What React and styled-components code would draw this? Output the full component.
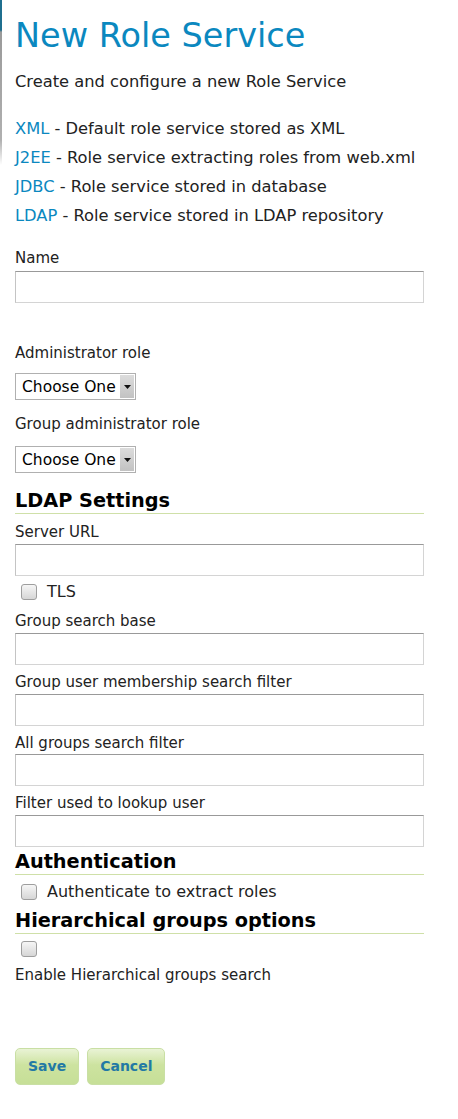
import React from 'react';
import styled, { createGlobalStyle } from 'styled-components';

const GlobalStyle = createGlobalStyle`
  body {
    margin: 0;
    background: #fff;
    font-family: "DejaVu Sans", Verdana, sans-serif;
    color: #222;
  }
`;

const Page = styled.div`
  position: relative;
  padding: 14px 34px 30px 15px;
  min-height: 1119px;
  box-sizing: border-box;
`;

const EdgeMark = styled.div`
  position: absolute;
  left: 0;
  top: 0;
  width: 2px;
  height: 165px;
  background: linear-gradient(#1f6f8f 0, #1f6f8f 30px, #9a9a9a 32px, #b0b0b0 140px, rgba(255,255,255,0) 165px);
`;

const Title = styled.h1`
  margin: 0;
  font-weight: normal;
  font-size: 33.5px;
  line-height: 44px;
  color: #0b88bf;
`;

const Intro = styled.p`
  margin: 14px 0 22px;
  font-size: 16.3px;
  line-height: 20px;
`;

const TypeList = styled.ul`
  list-style: none;
  margin: 0 0 18px;
  padding: 0;
`;

const TypeItem = styled.li`
  font-size: 16.3px;
  line-height: 29px;
`;

const TypeLink = styled.a`
  color: #0b88bf;
  text-decoration: none;
`;

const Label = styled.label`
  display: block;
  font-size: 15px;
  line-height: 20px;
  margin: ${p => p.$top || 0}px 0 ${p => p.$bottom ?? 2}px;
`;

const TextInput = styled.input`
  display: block;
  box-sizing: border-box;
  width: 409px;
  height: 32px;
  margin: 0;
  border: 1px solid #d4d4d4;
  border-top-color: #999;
  border-left-color: #c4c4c4;
  background: #fff;
  font: inherit;
`;

const SelectBox = styled.div`
  display: inline-flex;
  align-items: stretch;
  height: 27px;
  box-sizing: border-box;
  border: 1px solid #b0b0b0;
  background: #fff;
  margin-bottom: 14px;
`;

const Select = styled.select`
  appearance: none;
  -webkit-appearance: none;
  border: none;
  background: transparent;
  font-family: "DejaVu Sans", sans-serif;
  font-size: 15.5px;
  color: #000;
  padding: 0 4px 0 6px;
  margin: 0;
  outline: none;
`;

const ArrowBtn = styled.span`
  width: 14px;
  margin: 1px 1px 1px 0;
  background: linear-gradient(#dcdcdc, #c2c2c2);
  display: flex;
  align-items: center;
  justify-content: center;
`;

const SectionTitle = styled.h3`
  margin: ${p => p.$top || 0}px 0 ${p => p.$bottom ?? 7}px;
  font-size: 19.3px;
  line-height: 24px;
  font-weight: bold;
  color: #000;
  width: 409px;
  border-bottom: 1px solid #cfe0a8;
`;

const CheckRow = styled.label`
  display: flex;
  align-items: center;
  gap: 10px;
  padding-left: 6px;
  font-size: 16px;
  line-height: 20px;
  margin: ${p => p.$top || 0}px 0 ${p => p.$bottom || 0}px;
`;

const Check = styled.input.attrs({ type: 'checkbox' })`
  appearance: none;
  -webkit-appearance: none;
  width: 16px;
  height: 16px;
  margin: 0;
  border: 1px solid #9e9e9e;
  border-radius: 3px;
  background: linear-gradient(#f6f6f6, #d6d6d6);
  flex: none;
`;

const Buttons = styled.div`
  display: flex;
  gap: 8px;
  margin-top: 63px;
`;

const Button = styled.button`
  height: 37px;
  padding: 0 12px;
  border: 1px solid #c9dfa4;
  border-radius: 5px;
  background: linear-gradient(#e9f3d5 0%, #cde3a0 45%, #c6df97 100%);
  color: #2279a5;
  font-family: "DejaVu Sans", sans-serif;
  font-weight: bold;
  font-size: 14px;
`;

const Arrow = () => (
  <svg width="7" height="4" viewBox="0 0 7 4">
    <path d="M0 0 L7 0 L3.5 4 Z" fill="#111" />
  </svg>
);

const RoleSelect = () => (
  <SelectBox>
    <Select defaultValue="">
      <option value="">Choose One</option>
    </Select>
    <ArrowBtn><Arrow /></ArrowBtn>
  </SelectBox>
);

const types = [
  ['XML', 'Default role service stored as XML'],
  ['J2EE', 'Role service extracting roles from web.xml'],
  ['JDBC', 'Role service stored in database'],
  ['LDAP', 'Role service stored in LDAP repository'],
];

export default function App() {
  return (
    <Page>
      <GlobalStyle />
      <EdgeMark />
      <Title>New Role Service</Title>
      <Intro>Create and configure a new Role Service</Intro>

      <TypeList>
        {types.map(([name, desc]) => (
          <TypeItem key={name}>
            <TypeLink href="#">{name}</TypeLink> - {desc}
          </TypeItem>
        ))}
      </TypeList>

      <Label $bottom={3}>Name</Label>
      <TextInput />

      <Label $top={40} $bottom={10}>Administrator role</Label>
      <RoleSelect />
      <Label $bottom={12}>Group administrator role</Label>
      <RoleSelect />

      <SectionTitle $top={2} $bottom={8}>LDAP Settings</SectionTitle>
      <Label>Server URL</Label>
      <TextInput />
      <CheckRow $top={6} $bottom={9}><Check /> TLS</CheckRow>
      <Label>Group search base</Label>
      <TextInput />
      <Label $top={7} $bottom={1.5}>Group user membership search filter</Label>
      <TextInput />
      <Label $top={7} $bottom={1.5}>All groups search filter</Label>
      <TextInput />
      <Label $top={7} $bottom={1.5}>Filter used to lookup user</Label>
      <TextInput />

      <SectionTitle $top={3}>Authentication</SectionTitle>
      <CheckRow><Check /> Authenticate to extract roles</CheckRow>
      <SectionTitle $top={7}>Hierarchical groups options</SectionTitle>
      <CheckRow $bottom={8}><Check /></CheckRow>
      <Label>Enable Hierarchical groups search</Label>

      <Buttons>
        <Button>Save</Button>
        <Button>Cancel</Button>
      </Buttons>
    </Page>
  );
}
